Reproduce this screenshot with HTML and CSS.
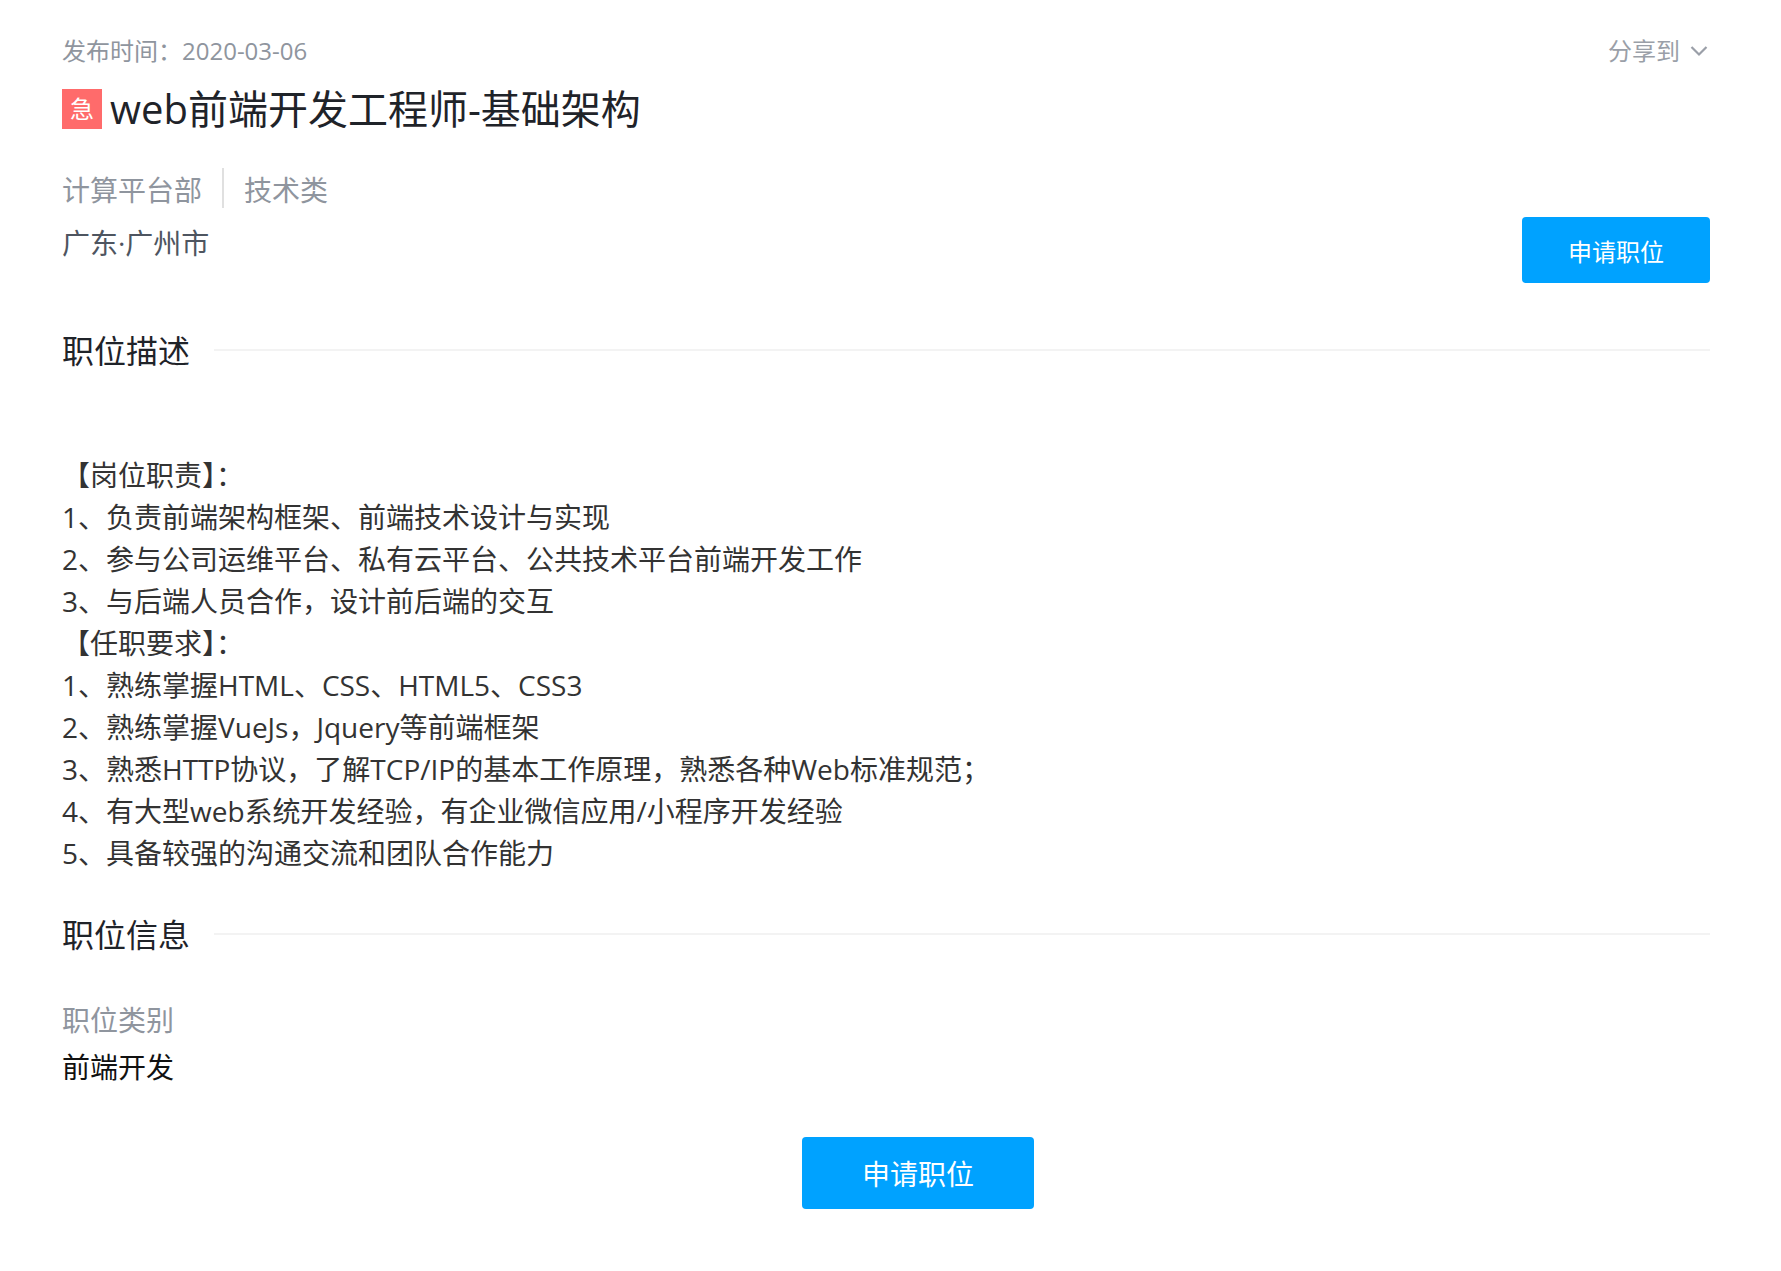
FILE: index.html
```html
<!DOCTYPE html>
<html lang="zh-CN">
<head>
<meta charset="utf-8">
<title>web前端开发工程师-基础架构</title>
<link rel="stylesheet" href="styles.css">
</head>
<body>
<main class="page">
  <div class="top">
    <div class="date">发布时间：2020-03-06</div>
    <div class="share">分享到
      <svg class="chevron" viewBox="0 0 18 12" width="18" height="12"><path d="M1.5 2 L9 9.5 L16.5 2" fill="none" stroke="#9a9fa8" stroke-width="2.2"/></svg>
    </div>
  </div>
  <div class="summary">
    <div class="info">
      <h1 class="title"><span class="urgent">急</span>web前端开发工程师-基础架构</h1>
      <div class="tags"><span class="tag">计算平台部</span><span class="tag tag-next">技术类</span></div>
      <div class="location">广东·广州市</div>
    </div>
    <button class="btn btn-small">申请职位</button>
  </div>
  <section>
    <div class="section-head"><h2>职位描述</h2><span class="rule"></span></div>
    <div class="desc">
      <div>【岗位职责】：</div>
      <div>1、负责前端架构框架、前端技术设计与实现</div>
      <div>2、参与公司运维平台、私有云平台、公共技术平台前端开发工作</div>
      <div>3、与后端人员合作，设计前后端的交互</div>
      <div>【任职要求】：</div>
      <div>1、熟练掌握HTML、CSS、HTML5、CSS3</div>
      <div>2、熟练掌握VueJs，Jquery等前端框架</div>
      <div>3、熟悉HTTP协议，了解TCP/IP的基本工作原理，熟悉各种Web标准规范；</div>
      <div>4、有大型web系统开发经验，有企业微信应用/小程序开发经验</div>
      <div>5、具备较强的沟通交流和团队合作能力</div>
    </div>
  </section>
  <section class="section-info">
    <div class="section-head"><h2>职位信息</h2><span class="rule"></span></div>
    <div class="field-label">职位类别</div>
    <div class="field-value">前端开发</div>
  </section>
  <div class="bottom">
    <button class="btn btn-large">申请职位</button>
  </div>
</main>
</body>
</html>
```
FILE: styles.css
```css
* { box-sizing: border-box; }
html, body { margin: 0; padding: 0; background: #fff; }
body {
  font-family: "Open Sans", "Noto Sans CJK SC", sans-serif;
  color: #333;
  height: 1271px;
  overflow: hidden;
}
.page { padding: 33px 71px 0 62px; }
.top { display: flex; justify-content: space-between; align-items: center; height: 36px; }
.date { font-size: 24px; line-height: 36px; color: #8f959e; }
.share { display: flex; align-items: center; gap: 10px; font-size: 24px; line-height: 36px; color: #9a9fa8; margin-right: 2px; }
.chevron { display: block; }
.summary { display: flex; justify-content: space-between; align-items: flex-end; }
.info { padding-bottom: 19px; }
.title { display: flex; align-items: center; margin: 20px 0 0; height: 40px; font-size: 40px; line-height: 40px; font-weight: 400; color: #1f2329; }
.urgent { display: flex; justify-content: center; align-items: center; width: 40px; height: 40px; margin-right: 8px; background: #ff6b6b; color: #fff; font-size: 24px; line-height: 40px; }
.tags { display: flex; margin-top: 39px; height: 40px; font-size: 28px; line-height: 44px; color: #8f959e; }
.tag-next { margin-left: 20px; padding-left: 20px; border-left: 2px solid #e0e0e0; }
.location { margin-top: 14px; font-size: 28px; line-height: 42px; color: #4e5560; }
.btn { display: block; border: 0; padding: 0; background: #00a2ff; color: #fff; border-radius: 4px; font-family: inherit; }
.btn-small { width: 188px; height: 66px; font-size: 24px; }
.section-head { display: flex; align-items: center; margin-top: 44px; height: 48px; }
h2 { margin: 0; font-size: 32px; line-height: 48px; font-weight: 400; color: #1f2329; }
.rule { flex: 1; height: 2px; margin: -3px 0 0 24px; background: #f3f3f3; }
.desc { margin-top: 79px; font-size: 28px; line-height: 42px; color: #333; }
.section-info .section-head { margin-top: 37px; }
.field-label { margin-top: 40px; font-size: 28px; line-height: 42px; color: #8f959e; }
.field-value { margin-top: 5px; font-size: 28px; line-height: 42px; color: #111; }
.bottom { margin: 49px 0 0 740px; }
.btn-large { width: 232px; height: 72px; font-size: 28px; }
```
